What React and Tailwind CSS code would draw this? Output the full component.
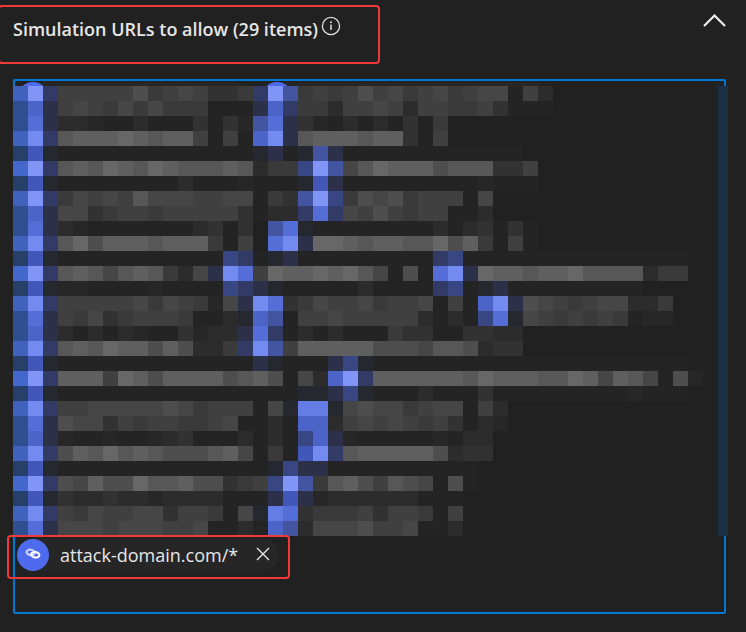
import React from 'react';

const CELL = 15;

const PALETTE = {
  0: '#242424', a: '#272727', 1: '#2c2c2c', 2: '#323232', 3: '#3a3a3a',
  4: '#404040', 5: '#464646', 6: '#4e4e4e', 7: '#575757', 8: '#5f5f5f', 9: '#676767',
  P: '#4062bd', Q: '#304f91', R: '#27406a', S: '#4467cc',
  E: '#8095f5', F: '#738bf1', T: '#647de4', G: '#556dd6', H: '#4c63c8',
  I: '#4357b8', J: '#4354a0', K: '#384684', L: '#323b66', M: '#2c3048', N: '#26282f',
};

// One string per row of tiles, left to right; "." leaves the panel visible.
const ROWS = [
  'PEL 4444463454223 LEJ343464534534 55041',
  'QHM 4543535333000 MHL331445414433 42000',
  'QGM 11a001000202a JGM2a01010203..',
  'PFL 7888987884040 HFM7888788204..',
  'RIN 0000000000000 NM0NJM000000000 000',
  'SEL 7879879877787 133KEJ579888677 7224',
  'RIN 000000001000a 000NIM000000000 a000',
  'PEL 3545475554455 032JEK365634440 5',
  'QHM 5523443444442 011LGL546434400 1',
  'QGM 1a00000001202 .JGN00000000101 2020',
  'PFL 7968887888304 .GFM99878877968 3040',
  'RIN 00000000000KL 0NM000000000LK0 00000000000000',
  'SEL 7875787315MFG 498898975060GFM 98878897777133',
  'RIN aa0000a0000KL MN0000010000LK0 NM000000000',
  'PFL 4444453543a5M FG2354453445040 HFM6543455113',
  'QGM 435234443001N HJ0445444441010 KGN54343430aa',
  'QHM 10101a002a11M GL0101000322002 211',
  'PFL 787988686113L FJ4888886665776 122',
  'RIN 0000000000000 MN000MKN0000000 00000000000000',
  'SEL 8884986888867 86051HEL8888887 98887798587506a',
  'RIN 0000000000000 000NNMKN0001000 2000000000a000',
  'PFL 4455555653444 05NTTN565534550 41',
  'QGM 6552434433450 010HH1454543420 1a',
  'QHM a00a00a120001 010KHMa00000a01 1',
  'PFL 6879787666785 030IFL788888612 2',
  'RIN 0000000000000 0NKMM0000000000',
  'SEL 6586697786623 4KEJ37864765060',
  'RIN 211211a111100 0MIMa111111000.',
  'PFL 4354455244305 NTG23334244304.',
  'QGM 5554555445001 0HJ15556445001.',
].map((row) => row.replaceAll(' ', ''));

function RedactedEntries() {
  return (
    <svg width="705" height="455" viewBox="0 0 705 455" shapeRendering="crispEdges" className="block shrink-0" role="img" aria-label="Redacted URLs">
      <path d="M4 17a16 16 0 0 1 16-16H221a16 16 0 0 1 16 16zM248 17a16 16 0 0 1 16-16H519a16 16 0 0 1 16 16z" fill="#262626" />
      <g fill="#4f6bed" shapeRendering="auto">
        <circle cx="20" cy="17" r="16" />
        <circle cx="264" cy="17" r="16" />
      </g>
      {ROWS.map((row, y) =>
        [...row].map((tone, x) =>
          tone === '.' ? null : (
            <rect key={`${x}-${y}`} x={x * CELL} y={5 + y * CELL} width={CELL} height={CELL} fill={PALETTE[tone]} />
          ),
        ),
      )}
    </svg>
  );
}

function InfoIcon() {
  return (
    <svg width="20" height="20" viewBox="0 0 20 20" fill="none" stroke="#dedede" strokeWidth="1.3" aria-hidden="true">
      <circle cx="10" cy="10" r="8.6" />
      <path d="M10 8.6v5.4" strokeWidth="1.5" />
      <circle cx="10" cy="6.3" r="1" fill="#dedede" stroke="none" />
    </svg>
  );
}

function LinkIcon() {
  return (
    <svg width="18" height="14" viewBox="0 0 18 14" fill="none" strokeWidth="2.1" aria-hidden="true">
      <ellipse cx="6.6" cy="4.4" rx="4.1" ry="2.7" stroke="#c9d2fb" transform="rotate(8 6.6 4.4)" />
      <ellipse cx="11.3" cy="6.8" rx="4.1" ry="2.7" stroke="#ffffff" transform="rotate(8 11.3 6.8)" />
    </svg>
  );
}

export default function App() {
  return (
    <main className="min-h-screen overflow-hidden bg-[#212121] pt-[5px] font-['Open_Sans','Noto_Sans',sans-serif] text-[#e6e6e6]">
      <header className="flex items-start justify-between pr-5">
        <div className="-ml-[2px] flex h-[59px] w-[382px] items-start rounded-[4px] border-2 border-[#f03a3a] pt-2 pl-[13px]">
          <h2 id="urls-title" className="pt-[2px] text-[18px] leading-6 font-semibold whitespace-nowrap">
            Simulation URLs to allow (29 items)
          </h2>
          <button type="button" aria-label="More information" className="ml-[3px] pt-px">
            <InfoIcon />
          </button>
        </div>
        <button type="button" aria-label="Collapse section" className="pt-2">
          <svg width="24" height="14" viewBox="0 0 24 14" fill="none" stroke="#f0f0f0" strokeWidth="2.2" aria-hidden="true">
            <path d="M2 13L12.5 2.5L23 13" />
          </svg>
        </button>
      </header>

      <section aria-labelledby="urls-title" className="mt-[15px] mr-5 ml-[13px] rounded-[2px] border-2 border-[#0078d4] pb-[33px]">
        <div className="-mr-1 -ml-[2px] flex justify-between">
          <div className="min-w-0 overflow-hidden">
            <RedactedEntries />
          </div>
          <div className="mt-[5px] w-[10px] shrink-0 bg-[#1b3044]" />
        </div>
        <div className="relative -mt-px -ml-2 flex h-11 w-[283px] items-start rounded-[4px] border-2 border-[#f03a3a] pt-px pl-2">
          <div className="flex h-[33px] w-[262px] items-center rounded-full bg-[#262626]">
            <span className="flex size-8 shrink-0 items-center justify-center rounded-full bg-[#4f6bed]">
              <LinkIcon />
            </span>
            <span className="ml-[11px] flex-1 text-[18px] leading-6 whitespace-nowrap">attack-domain.com/*</span>
            <button type="button" aria-label="Remove attack-domain.com/*" className="mr-2">
              <svg width="16" height="16" viewBox="0 0 16 16" fill="none" stroke="#e6e6e6" strokeWidth="1.4" aria-hidden="true">
                <path d="M2 1l12 12M14 1L2 13" />
              </svg>
            </button>
          </div>
        </div>
      </section>
    </main>
  );
}
